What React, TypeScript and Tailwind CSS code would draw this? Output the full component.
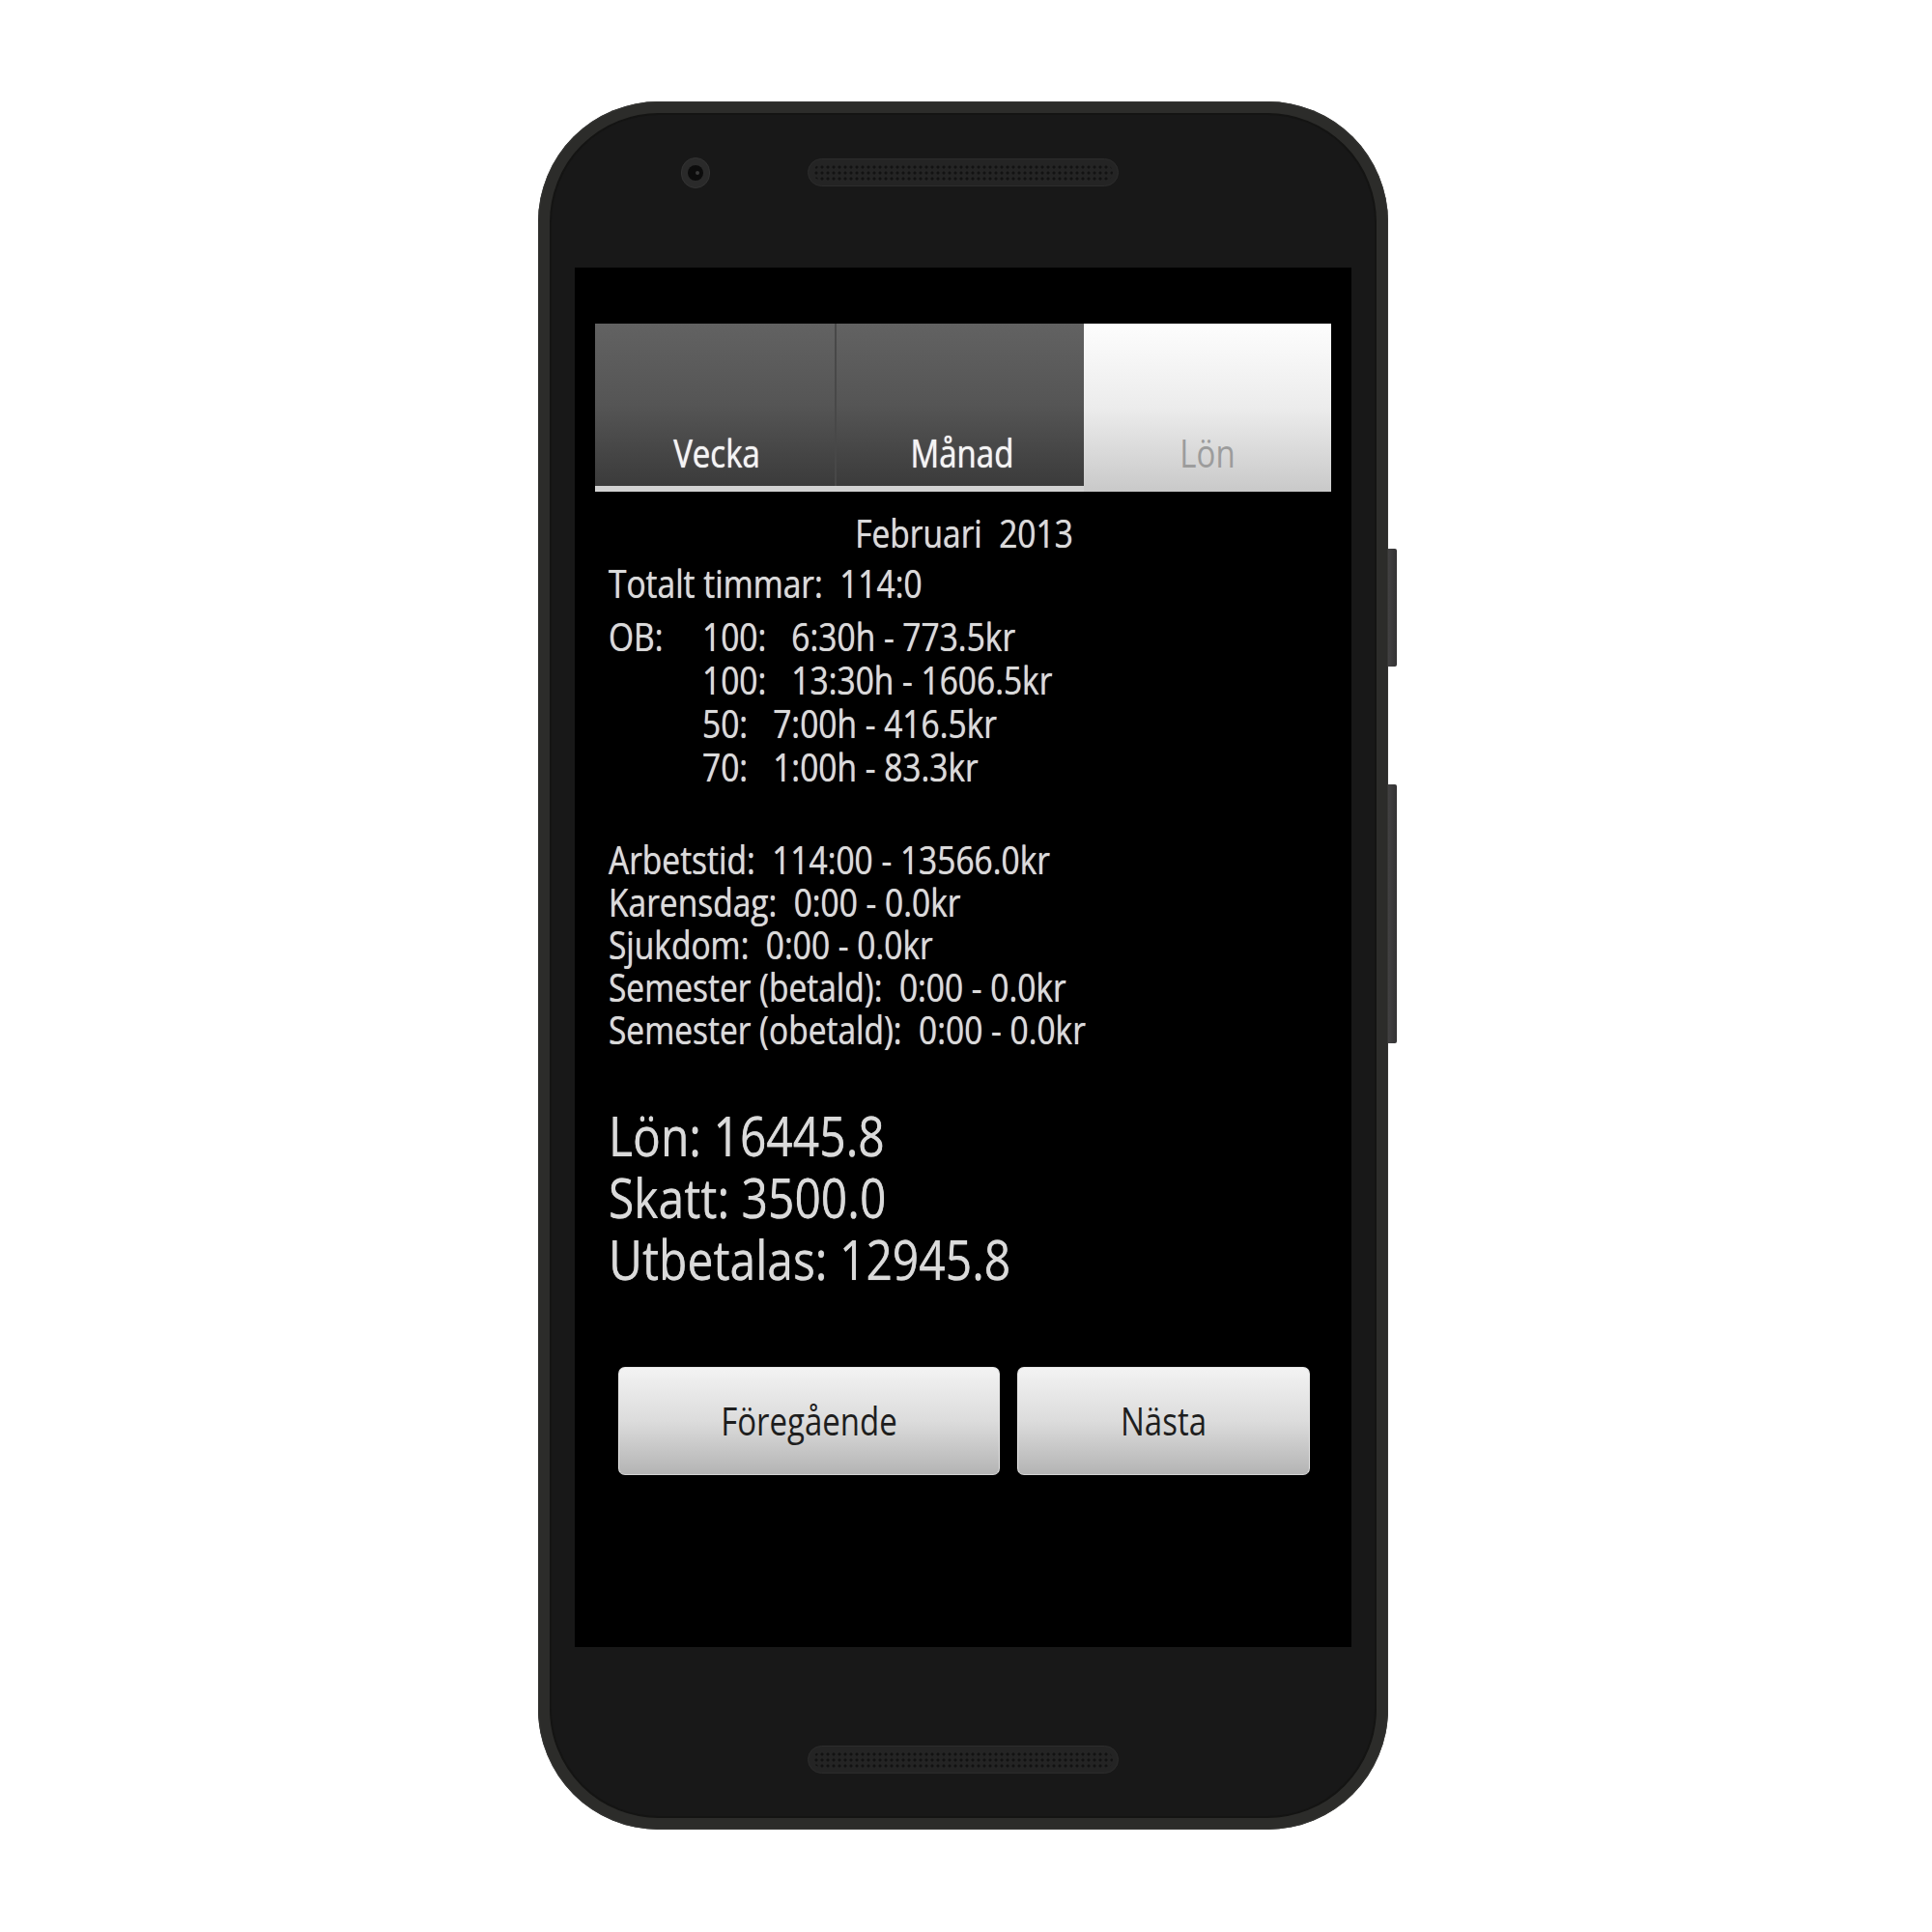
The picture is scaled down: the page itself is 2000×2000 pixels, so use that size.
import React from 'react';

// Tall, narrow Android-era type: Open Sans (Droid Sans descendant) stretched vertically
const Stretch = ({ children }: { children: React.ReactNode }) => (
  <span className="inline-block leading-[1.1] scale-y-[1.19] whitespace-pre">{children}</span>
);

const Row = ({ children }: { children: React.ReactNode }) => (
  <div className="h-[45px] leading-[45px]">
    <Stretch>{children}</Stretch>
  </div>
);

const SmallRow = ({ children }: { children: React.ReactNode }) => (
  <div className="h-[44px] leading-[44px]">
    <Stretch>{children}</Stretch>
  </div>
);

const BigRow = ({ children }: { children: React.ReactNode }) => (
  <div className="h-[64px] leading-[64px] text-[48px]">
    <Stretch>{children}</Stretch>
  </div>
);

const Speaker = () => (
  <div className="w-[322px] h-[29px] rounded-full bg-[#242424] border border-[#2c2c2c] p-[5px]">
    <div className="w-full h-full rounded-full bg-[radial-gradient(circle,#121212_1.3px,transparent_1.8px)] bg-[length:6px_6px]" />
  </div>
);

const obRows = [
  '100:   6:30h - 773.5kr',
  '100:   13:30h - 1606.5kr',
  '50:   7:00h - 416.5kr',
  '70:   1:00h - 83.3kr',
];

const timeRows = [
  'Arbetstid:  114:00 - 13566.0kr',
  'Karensdag:  0:00 - 0.0kr',
  'Sjukdom:  0:00 - 0.0kr',
  'Semester (betald):  0:00 - 0.0kr',
  'Semester (obetald):  0:00 - 0.0kr',
];

export default function App() {
  return (
    <div className="w-[2000px] h-[2000px] bg-white pt-[105px] pl-[557px] font-['Open_Sans','DejaVu_Sans',sans-serif]">
      {/* Phone body */}
      <div className="relative w-[880px] h-[1789px] rounded-[125px] bg-[#2c2c2a] p-[12px] shadow-[inset_0_0_0_1px_#363634]">
        {/* side buttons */}
        <div className="absolute right-[-9px] top-[463px] w-[9px] h-[122px] rounded-r-[2px] bg-linear-to-r from-[#424142] to-[#333233]" />
        <div className="absolute right-[-9px] top-[707px] w-[9px] h-[268px] rounded-r-[2px] bg-linear-to-r from-[#424142] to-[#333233]" />

        <div className="h-full rounded-[113px] bg-[#181818] border-2 border-[#141413] flex flex-col items-center">
          {/* Top bezel */}
          <div className="w-full h-[158px] flex items-center self-start pl-[134px] pt-[45px] pb-[84px]">
            <div className="w-[30px] h-[32px] rounded-full bg-[#2a2a2a] border border-[#333] flex items-center justify-center">
              <div className="w-[16px] h-[16px] rounded-full bg-[#0c0c0c] flex items-center justify-center">
                <div className="w-[4px] h-[4px] rounded-full bg-[#3a3a3a] ml-[3px] mt-[1px]" />
              </div>
            </div>
            <div className="ml-[101px]">
              <Speaker />
            </div>
          </div>

          {/* Screen */}
          <div className="w-[804px] h-[1428px] bg-black flex flex-col text-[33.5px] text-[#dadada] [text-shadow:0_0_0.7px_#d0d0d0]">
            {/* Tabs */}
            <div className="flex w-[762px] h-[174px] mt-[58px] mx-auto">
              <div className="flex flex-col w-[506px]">
                <div className="flex h-[168px] bg-linear-to-b from-[#626262] via-[#555555] to-[#3b3b3b]">
                  <div className="w-[250px] border-r-2 border-[#484848] flex items-end justify-center pb-[11px] pl-[4px]">
                    <div className="h-[45px] leading-[45px] text-[33px] text-[#f4f4f4] [text-shadow:0_0_1px_#ffffff]">
                      <Stretch>Vecka</Stretch>
                    </div>
                  </div>
                  <div className="flex-1 flex items-end justify-center pb-[11px] pl-[4px]">
                    <div className="h-[45px] leading-[45px] text-[33px] text-[#f4f4f4] [text-shadow:0_0_1px_#ffffff]">
                      <Stretch>Månad</Stretch>
                    </div>
                  </div>
                </div>
                <div className="h-[6px] bg-[#d2d2d2]" />
              </div>
              <div className="w-[256px] bg-linear-to-b from-[#fdfdfd] via-[#ececec] to-[#c9c9c9] flex items-end justify-center pb-[17px]">
                <div className="h-[45px] leading-[45px] text-[33px] text-[#9c9c9c] [text-shadow:none]">
                  <Stretch>Lön</Stretch>
                </div>
              </div>
            </div>

            {/* Month */}
            <div className="mt-[21px] text-center pl-[2px]">
              <Row>Februari  2013</Row>
            </div>

            <div className="pl-[35px]">
              <div className="mt-[7px]">
                <Row>Totalt timmar:  114:0</Row>
              </div>

              <div className="mt-[10px] flex">
                <div className="w-[97px]">
                  <Row>OB:</Row>
                </div>
                <div className="flex flex-col">
                  {obRows.map((v) => (
                    <Row key={v}>{v}</Row>
                  ))}
                </div>
              </div>

              <div className="mt-[51px]">
                {timeRows.map((t) => (
                  <SmallRow key={t}>{t}</SmallRow>
                ))}
              </div>

              <div className="mt-[56px]">
                <BigRow>Lön: 16445.8</BigRow>
                <BigRow>Skatt: 3500.0</BigRow>
                <BigRow>Utbetalas: 12945.8</BigRow>
              </div>
            </div>

            {/* Buttons */}
            <div className="mt-[79px] flex pl-[45px] gap-[18px] [text-shadow:none]">
              <button className="w-[395px] h-[112px] rounded-[7px] border border-[#e6e6e6] border-b-[#d4d4d4] bg-linear-to-b from-[#f3f3f3] via-[#dcdcdc] to-[#b4b4b4] flex items-center justify-center text-[33px] text-[#1e1e1e]">
                <div className="h-[45px] leading-[45px]">
                  <Stretch>Föregående</Stretch>
                </div>
              </button>
              <button className="w-[303px] h-[112px] rounded-[7px] border border-[#e6e6e6] border-b-[#d4d4d4] bg-linear-to-b from-[#f3f3f3] via-[#dcdcdc] to-[#b4b4b4] flex items-center justify-center text-[33px] text-[#1e1e1e]">
                <div className="h-[45px] leading-[45px]">
                  <Stretch>Nästa</Stretch>
                </div>
              </button>
            </div>
          </div>

          {/* Bottom bezel */}
          <div className="mt-[102px]">
            <Speaker />
          </div>
        </div>
      </div>
    </div>
  );
}
